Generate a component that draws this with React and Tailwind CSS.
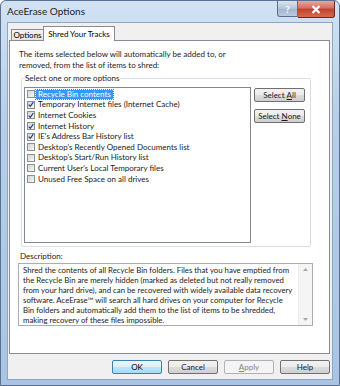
import React from 'react';

const items = [
  ['Recycle Bin contents', false],
  ['Temporary Internet files (Internet Cache)', true],
  ['Internet Cookies', true],
  ['Internet History', true],
  ["IE's Address Bar History list", true],
  ["Desktop's Recently Opened Documents list", false],
  ["Desktop's Start/Run History list", false],
  ["Current User's Local Temporary files", false],
  ['Unused Free Space on all drives', false],
];

const description = [
  'Shred the contents of all Recycle Bin folders. Files that you have emptied from',
  'the Recycle Bin are merely hidden (marked as deleted but not really removed',
  'from your hard drive), and can be recovered with widely available data recovery',
  'software. AceErase™ will search all hard drives on your computer for Recycle',
  'Bin folders and automatically add them to the list of items to be shredded,',
  'making recovery of these files impossible.',
];

const btn =
  'h-[14px] flex items-center justify-center rounded-[2px] border border-[#707070] bg-[linear-gradient(to_bottom,#f2f2f2_0%,#ebebeb_50%,#dddddd_51%,#cfcfcf_100%)] text-[8px] leading-none text-[#1a1a1a]';

function Check({ checked }) {
  return (
    <span className="w-[8px] h-[8px] shrink-0 border border-[#8e8f8f] bg-[linear-gradient(135deg,#d6d6d6,#f6f6f6)] flex items-center justify-center">
      {checked && (
        <svg width="7" height="7" viewBox="0 0 7 7">
          <path d="M0.8 3.6 L2.7 5.6 L6.2 0.8" stroke="#21397a" strokeWidth="1.3" fill="none" />
        </svg>
      )}
    </span>
  );
}

export default function App() {
  return (
    <div className="w-[340px] h-[386px] flex flex-col overflow-hidden rounded-t-[6px] border border-[#5a7194] bg-[linear-gradient(to_bottom,#d2e2f3,#b7cfe9_30%,#a9c4e3)] font-['Lato','Noto_Sans',sans-serif] text-black">
      {/* title bar */}
      <div className="h-[21px] flex items-start shrink-0">
        <div className="pl-[6px] pt-[4px] text-[10px] leading-[12px] text-[#1e1e1e]">AceErase Options</div>
        <div className="ml-auto mr-[4px] flex">
          <div className="w-[21px] h-[16px] rounded-bl-[3px] border border-t-0 border-[#5d6f88] bg-[linear-gradient(to_bottom,#dae4ef,#b4c5da_50%,#9fb3cd_51%,#b8cce2)] flex items-center justify-center text-[10px] font-bold text-white leading-none">
            ?
          </div>
          <div className="w-[37px] h-[17px] rounded-br-[3px] border border-t-0 border-l-0 border-[#6b2a22] bg-[linear-gradient(to_bottom,#e8a89c,#d0705f_45%,#c1412e_50%,#d36a50)] flex items-center justify-center">
            <svg width="10" height="9" viewBox="0 0 10 9">
              <path d="M1.5 1 L8.5 8 M8.5 1 L1.5 8" stroke="#fff" strokeWidth="2.2" />
            </svg>
          </div>
        </div>
      </div>

      {/* client area */}
      <div className="mx-[6px] mb-[5px] flex-1 flex flex-col border border-[#8ea6c4] bg-[#f0f0f0]">
        {/* tabs */}
        <div className="pt-[2px] pl-[3px] flex items-end h-[17px] shrink-0">
          <div className="h-[11px] w-[32px] border border-b-0 border-r-0 border-[#898c95] bg-[linear-gradient(to_bottom,#f3f3f3,#e3e3e3)] text-[8px] leading-[10px] flex justify-center">
            Options
          </div>
          <div className="relative z-10 -mb-px h-[15px] w-[72px] border border-b-0 border-[#898c95] bg-white text-[8px] leading-[12px] flex justify-center pt-[1px]">
            Shred Your Tracks
          </div>
        </div>

        {/* tab panel */}
        <div className="ml-[1px] mr-[2px] h-[314px] shrink-0 border border-[#898c95] bg-white text-[8px] text-[#1a1a1a]">
          <div className="pt-[8px] pl-[9px] leading-[11px]">
            <div>The items selected below will automatically be added to, or</div>
            <div>removed, from the list of items to shred:</div>
          </div>

          <fieldset className="mt-[2px] ml-[11px] mr-[18px] border border-[#d5dfe5] rounded-[2px] pl-[2px] pb-[3px]">
            <legend className="px-[1px] leading-[11px]">Select one or more options</legend>
            <div className="flex items-start gap-[3px] mt-[3px]">
              <div className="w-[227px] h-[156px] border border-[#828790] bg-white pt-[1px] pl-[2px]">
                {items.map(([label, checked], i) => (
                  <div key={i} className="h-[10.6px] flex items-center gap-[1px]">
                    <Check checked={checked} />
                    {i === 0 ? (
                      <span className="bg-[#3399ff] text-white px-[2px] leading-[9px] outline-1 outline-dotted outline-[#7a7a7a]">
                        {label}
                      </span>
                    ) : (
                      <span className="px-[2px] leading-[9px]">{label}</span>
                    )}
                  </div>
                ))}
              </div>
              <div className="flex flex-col gap-[7px] pt-[1px]">
                <div className={`${btn} w-[51px]`}>
                  Select&nbsp;<span className="underline">A</span>ll
                </div>
                <div className={`${btn} w-[51px]`}>
                  Select&nbsp;<span className="underline">N</span>one
                </div>
              </div>
            </div>
          </fieldset>

          <div className="mt-[4px] ml-[10px] leading-[11px]">Description:</div>
          <div className="mt-[1px] ml-[8px] w-[295px] h-[63px] border border-[#abadb3] bg-white flex">
            <div className="flex-1 pl-[4px] pt-[1px] text-[7.8px] leading-[10px] text-[#222] whitespace-nowrap overflow-hidden">
              {description.map((line, i) => (
                <div key={i}>{line}</div>
              ))}
            </div>
            <div className="w-[14px] shrink-0 bg-[#f5f5f5] border-l border-[#ececec] flex flex-col items-center justify-between py-[4px]">
              <svg width="5" height="3" viewBox="0 0 5 3">
                <path d="M0 3 L2.5 0 L5 3 Z" fill="#a8a8a8" />
              </svg>
              <svg width="5" height="3" viewBox="0 0 5 3">
                <path d="M0 0 L2.5 3 L5 0 Z" fill="#a8a8a8" />
              </svg>
            </div>
          </div>
        </div>

        {/* dialog buttons */}
        <div className="mt-[6px] mr-[2px] flex justify-end gap-[6px]">
          <div className="h-[14px] w-[50px] flex items-center justify-center rounded-[2px] border border-[#3c7fb1] bg-[linear-gradient(to_bottom,#eaf6fd_0%,#d9f0fc_50%,#bee6fd_51%,#a7d9f5_100%)] text-[8px] leading-none">
            OK
          </div>
          <div className={`${btn} w-[50px]`}>Cancel</div>
          <div className="h-[14px] w-[50px] flex items-center justify-center rounded-[2px] border border-[#adb2b5] bg-[#f4f4f4] text-[8px] leading-none text-[#838383]">
            <span className="underline">A</span>pply
          </div>
          <div className={`${btn} w-[50px]`}>Help</div>
        </div>
      </div>
    </div>
  );
}
